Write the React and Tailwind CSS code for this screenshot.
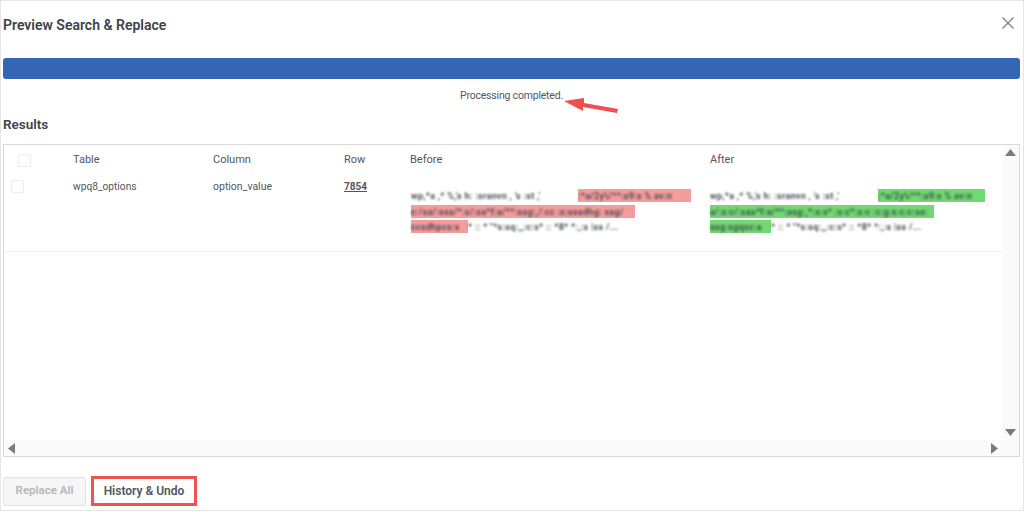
const font = { fontFamily: 'Roboto, "Open Sans", sans-serif' };

function Seg({ w, children, hl }) {
  return (
    <div className={`whitespace-nowrap h-[13px] leading-[13px] ${w} ${hl || ""}`}>
      <span className="text-[9px] tracking-[0.3px] text-[#4a5056] blur-[1px] inline-block font-bold">{children}</span>
    </div>
  );
}

function Cell({ hl, widths, texts }) {
  return (
    <div className="flex flex-col gap-[2.5px]">
      <div className="flex">
        <Seg w={widths[0]}>{texts[0]}</Seg>
        <Seg w={widths[1]} hl={hl}>{texts[1]}</Seg>
      </div>
      <Seg w={widths[2]} hl={hl}>{texts[2]}</Seg>
      <div className="flex">
        <Seg w={widths[3]} hl={hl}>{texts[3]}</Seg>
        <Seg w={widths[4]}>{texts[4]}</Seg>
      </div>
    </div>
  );
}

const Box = () => (
  <div className="w-[13px] h-[13px] rounded-[2px] border border-[#ececec] bg-white" />
);

export default function App() {
  return (
    <div style={font} className="relative w-[1024px] h-[511px] bg-white border border-[#e6e6e6] pl-[2px] pr-[3px] text-[#50575e] overflow-hidden">
      <div className="flex items-center justify-between h-[48px]">
        <h1 className="text-[14px] font-semibold text-[#3c434a]">Preview Search &amp; Replace</h1>
        <svg width="14" height="14" viewBox="0 0 14 14" className="mr-[5px] mt-[-5px]" stroke="#7b8088" strokeWidth="1.3" fill="none">
          <path d="M1.5 1.5 12.5 12.5M12.5 1.5 1.5 12.5" />
        </svg>
      </div>

      <div className="mt-[9px] h-[21px] rounded-[3px] bg-[#3566b5]" />
      <p className="mt-[9px] text-center text-[10.5px] tracking-[-0.2px] leading-[16px]">Processing completed.</p>

      <h2 className="mt-[11px] text-[13.5px] leading-[18px] font-semibold text-[#3c434a]">Results</h2>

      <div className="relative mt-[11px] h-[313px] border border-[#d9d9d9] text-[11px]">
        <div className="flex h-[29px] items-center pt-[1px]">
          <div className="w-[69px] pl-[14px]"><Box /></div>
          <div className="w-[140px]">Table</div>
          <div className="w-[131px]">Column</div>
          <div className="w-[66px]">Row</div>
          <div className="w-[300px]">Before</div>
          <div>After</div>
        </div>
        <div className="flex h-[78px] border-b border-[#f1f1f1] pt-[5px] mr-[16px]">
          <div className="w-[69px] pl-[7px] pt-[1px]"><Box /></div>
          <div className="w-[140px] text-[10.2px]">wpq8_options</div>
          <div className="w-[131px] text-[10.5px]">option_value</div>
          <div className="w-[66px] font-bold underline text-[10px] leading-[16px]">7854</div>
          <div className="w-[300px] pt-[10px] pl-[1px]">
            <Cell
              hl="bg-[#f59c9c]"
              widths={["w-[167px]", "w-[113px]", "w-[224px]", "w-[57px]", "w-[170px]"]}
              texts={[
                "wp,*a ,* %,'s h: :sranvn , 's :st  ,'",
                ":*a/2y\\/**:a9:s % av:n",
                "c:/sa/:ssa/*:s/:sa*f:a/**:asg:,/:cc :s:asadhg: sag/",
                "ccsdhpcs:s",
                "* :: * \"*s:sq:,,:c:s* :: *8* *:,:s |ss /...",
              ]}
            />
          </div>
          <div className="pt-[10px]">
            <Cell
              hl="bg-[#70d970]"
              widths={["w-[168px]", "w-[107px]", "w-[224px]", "w-[61px]", "w-[170px]"]}
              texts={[
                "wp,*a ,* %,'s h: :sranvn , 's :st  ,'",
                ":*a/2y\\/**:a9:s % av:n",
                "a/:s:c/:saa*f:a/**:asg:,*:s:s* :s:c*:s:c :c:g:s:c:c:sa:",
                "asg:sgqsc:a",
                "* :: * \"*s:sq:,,:c:s* :: *8* *:,:s |ss /...",
              ]}
            />
          </div>
        </div>

        <div className="absolute right-0 top-0 bottom-0 w-[16px] bg-[#fafafa] flex flex-col items-center justify-between pt-[4px] pb-[20px] pr-[1px]">
          <svg width="11" height="7" viewBox="0 0 11 7" fill="#7a7a7a"><path d="M5.5 0 11 7H0z" /></svg>
          <svg width="11" height="7" viewBox="0 0 11 7" fill="#7a7a7a"><path d="M0 0h11L5.5 7z" /></svg>
        </div>
        <div className="absolute left-0 right-[16px] bottom-0 h-[16px] bg-[#fafafa] flex items-center justify-between pl-[4px] pr-[5px]">
          <svg width="7" height="11" viewBox="0 0 7 11" fill="#7a7a7a"><path d="M7 0v11L0 5.5z" /></svg>
          <svg width="7" height="11" viewBox="0 0 7 11" fill="#7a7a7a"><path d="M0 0v11l7-5.5z" /></svg>
        </div>
      </div>

      <div className="flex items-center gap-[5px] mt-[19px]">
        <button className="w-[83px] h-[29px] rounded-[3px] border border-[#e2e2e2] bg-[#f6f6f6] text-[11.5px] font-semibold text-[#b4b7ba]">Replace All</button>
        <button className="w-[106px] h-[30px] border-[3px] border-[#ef5350] bg-white text-[12px] font-semibold text-[#50575e]">History &amp; Undo</button>
      </div>

      <svg width="60" height="24" viewBox="0 0 60 24" className="absolute left-[562px] top-[93px]" fill="#ef4f4f">
        <path d="M1 7 21 4 21 9 55 15 54 19 20 13 20 17z" />
      </svg>
    </div>
  );
}
